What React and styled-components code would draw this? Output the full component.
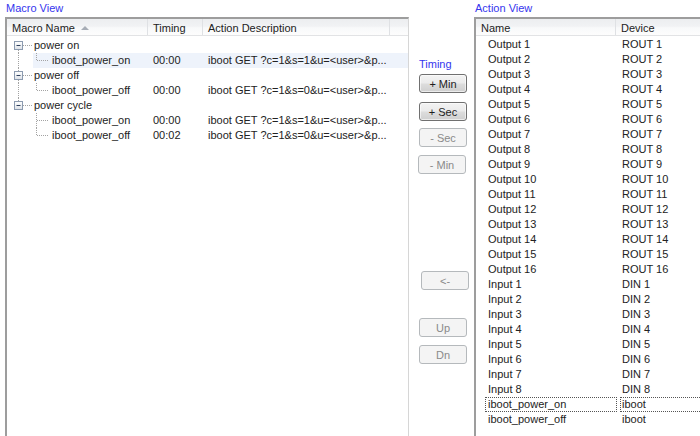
import React from 'react';
import styled, { createGlobalStyle } from 'styled-components';

const Global = createGlobalStyle`
  html, body { margin: 0; padding: 0; background: #fff; overflow: hidden; }
  body { font-family: "Liberation Sans", Arial, sans-serif; font-size: 11px; color: #222; }
  * { box-sizing: border-box; }
`;

const Page = styled.div`
  display: flex;
  width: 700px;
  height: 436px;
  overflow: hidden;
  padding-left: 5px;
`;

const Section = styled.div`
  display: flex;
  flex-direction: column;
  flex-shrink: 0;
  width: ${p => p.$w}px;
`;

const Caption = styled.div`
  height: 17px;
  line-height: 17px;
  padding-left: ${p => p.$pad || 1}px;
  color: #3535ee;
`;

const Panel = styled.div`
  flex: 1;
  background: #fff;
  border-top: 2px solid #9d9d9d;
  border-left: 2px solid #9d9d9d;
  border-right: ${p => (p.$open ? 'none' : '1px solid #d6d6d6')};
  overflow: hidden;
`;

const Header = styled.div`
  display: flex;
  height: 17px;
  border-bottom: 1px solid #e2e3e5;
  background: linear-gradient(#eceef0 0%, #f1f2f4 45%, #f8f9fa 55%, #fdfdfd 100%);
`;

const HeadCell = styled.div`
  display: flex;
  align-items: flex-start;
  flex-shrink: 0;
  width: ${p => p.$w}px;
  padding: 3px 0 0 5px;
  line-height: 13px;
  border-right: ${p => (p.$last ? 'none' : '1px solid #dfe1e4')};
  white-space: nowrap;
`;

const SortArrow = styled.span`
  width: 0;
  height: 0;
  margin: 4px 0 0 6px;
  border-left: 4px solid transparent;
  border-right: 4px solid transparent;
  border-bottom: 4px solid #a7adb6;
`;

const List = styled.div`
  padding-top: ${p => p.$top}px;
`;

const MacroRow = styled.div`
  display: flex;
  height: 15px;
  line-height: 15px;
  background: ${p =>
    p.$hot ? 'linear-gradient(to right, transparent 26px, #eef3fb 26px)' : 'transparent'};
`;

const NameCell = styled.div`
  display: flex;
  align-items: center;
  width: 141px;
  flex-shrink: 0;
  white-space: nowrap;
`;

const Cell = styled.div`
  width: ${p => p.$w}px;
  flex-shrink: 0;
  padding-left: ${p => p.$pad}px;
  white-space: nowrap;
  overflow: hidden;
`;

const Gutter = styled.svg`
  flex-shrink: 0;
  display: block;
`;

const ActionRow = styled.div`
  display: flex;
  height: 15px;
  padding-left: 9px;
`;

const FocusCell = styled.div`
  flex-shrink: 0;
  width: ${p => p.$w}px;
  margin-left: ${p => p.$ml}px;
  padding-left: ${p => p.$pad}px;
  height: 15px;
  line-height: 13px;
  border: 1px dotted ${p => (p.$focus ? '#555' : 'transparent')};
  white-space: nowrap;
`;

const Middle = styled.div`
  display: flex;
  flex-direction: column;
  flex-shrink: 0;
  width: 65px;
  padding-left: 10px;
`;

const TimingLabel = styled.div`
  margin-top: 58px;
  height: 13px;
  line-height: 13px;
  color: #3535ee;
  padding-left: 0;
`;

const Btn = styled.div`
  width: 48px;
  height: 19px;
  margin-top: ${p => p.$mt}px;
  margin-left: ${p => p.$ml || 0}px;
  display: flex;
  align-items: center;
  justify-content: center;
  border-radius: 3px;
  border: 1px solid ${p => (p.$disabled ? '#b5b9bc' : '#707070')};
  background: ${p =>
    p.$disabled
      ? '#f4f4f4'
      : 'linear-gradient(#f3f3f3 0%, #ebebeb 48%, #dddddd 52%, #cfcfcf 100%)'};
  color: ${p => (p.$disabled ? '#8a8a8a' : '#1e1e1e')};
  box-shadow: ${p => (p.$disabled ? 'none' : 'inset 0 0 0 1px rgba(255,255,255,0.6)')};
`;

const dot = { stroke: '#a3a3a3', strokeWidth: 1, strokeDasharray: '1 1' };

function ParentGutter({ first, hasNext }) {
  return (
    <Gutter width="27" height="15" viewBox="0 0 27 15">
      {!first && <line x1="11.5" y1="0" x2="11.5" y2="3.5" style={dot} />}
      {hasNext && <line x1="11.5" y1="12" x2="11.5" y2="15" style={dot} />}
      <line x1="16" y1="7.5" x2="25" y2="7.5" style={dot} />
      <defs>
        <linearGradient id="bx" x1="0" y1="0" x2="0" y2="1">
          <stop offset="0" stopColor="#ffffff" />
          <stop offset="1" stopColor="#dde2e8" />
        </linearGradient>
      </defs>
      <rect x="7.5" y="3.5" width="8" height="8" fill="url(#bx)" stroke="#8c9bb0" />
      <line x1="9.5" y1="7.5" x2="13.5" y2="7.5" stroke="#2c3e5c" strokeWidth="1" />
    </Gutter>
  );
}

function ChildGutter({ parentHasNext, last }) {
  return (
    <Gutter width="45" height="15" viewBox="0 0 45 15">
      {parentHasNext && <line x1="11.5" y1="0" x2="11.5" y2="15" style={dot} />}
      <line x1="29.5" y1="0" x2="29.5" y2={last ? 7.5 : 15} style={dot} />
      <line x1="30" y1="7.5" x2="42" y2="7.5" style={dot} />
    </Gutter>
  );
}

const macros = [
  {
    name: 'power on',
    items: [{ n: 'iboot_power_on', t: '00:00', a: 'iboot GET ?c=1&s=1&u=<user>&p...', hot: true }],
  },
  {
    name: 'power off',
    items: [{ n: 'iboot_power_off', t: '00:00', a: 'iboot GET ?c=1&s=0&u=<user>&p...' }],
  },
  {
    name: 'power cycle',
    items: [
      { n: 'iboot_power_on', t: '00:00', a: 'iboot GET ?c=1&s=1&u=<user>&p...' },
      { n: 'iboot_power_off', t: '00:02', a: 'iboot GET ?c=1&s=0&u=<user>&p...' },
    ],
  },
];

const actions = [
  ...Array.from({ length: 16 }, (_, i) => ({ n: `Output ${i + 1}`, d: `ROUT ${i + 1}` })),
  ...Array.from({ length: 8 }, (_, i) => ({ n: `Input ${i + 1}`, d: `DIN ${i + 1}` })),
  { n: 'iboot_power_on', d: 'iboot', focus: true },
  { n: 'iboot_power_off', d: 'iboot' },
];

export default function App() {
  return (
    <>
      <Global />
      <Page>
        <Section $w={404}>
          <Caption>Macro View</Caption>
          <Panel>
            <Header>
              <HeadCell $w={141}>
                Macro Name
                <SortArrow />
              </HeadCell>
              <HeadCell $w={55}>Timing</HeadCell>
              <HeadCell $w={187}>Action Description</HeadCell>
              <HeadCell $w={18} $last />
            </Header>
            <List $top={1.5}>
              {macros.map((m, mi) => {
                const hasNext = mi < macros.length - 1;
                return (
                  <React.Fragment key={m.name}>
                    <MacroRow>
                      <NameCell>
                        <ParentGutter first={mi === 0} hasNext={hasNext} />
                        {m.name}
                      </NameCell>
                    </MacroRow>
                    {m.items.map((it, ii) => (
                      <MacroRow key={ii} $hot={it.hot}>
                        <NameCell>
                          <ChildGutter parentHasNext={hasNext} last={ii === m.items.length - 1} />
                          {it.n}
                        </NameCell>
                        <Cell $w={55} $pad={5}>{it.t}</Cell>
                        <Cell $w={187} $pad={5}>{it.a}</Cell>
                      </MacroRow>
                    ))}
                  </React.Fragment>
                );
              })}
            </List>
          </Panel>
        </Section>

        <Middle>
          <TimingLabel>Timing</TimingLabel>
          <Btn $mt={3}>+ Min</Btn>
          <Btn $mt={9}>+ Sec</Btn>
          <Btn $mt={7} $disabled>- Sec</Btn>
          <Btn $mt={8} $ml={-1} $disabled>- Min</Btn>
          <Btn $mt={97} $ml={2} $disabled>&lt;-</Btn>
          <Btn $mt={28} $disabled>Up</Btn>
          <Btn $mt={8} $disabled>Dn</Btn>
        </Middle>

        <Section $w={240}>
          <Caption $pad={1}>Action View</Caption>
          <Panel $open>
            <Header>
              <HeadCell $w={140}>Name</HeadCell>
              <HeadCell $w={100} $last>Device</HeadCell>
            </Header>
            <List $top={0.5}>
              {actions.map(a => (
                <ActionRow key={a.n}>
                  <FocusCell $w={132} $ml={0} $pad={2} $focus={a.focus}>{a.n}</FocusCell>
                  <FocusCell $w={100} $ml={3} $pad={1} $focus={a.focus}>{a.d}</FocusCell>
                </ActionRow>
              ))}
            </List>
          </Panel>
        </Section>
      </Page>
    </>
  );
}
